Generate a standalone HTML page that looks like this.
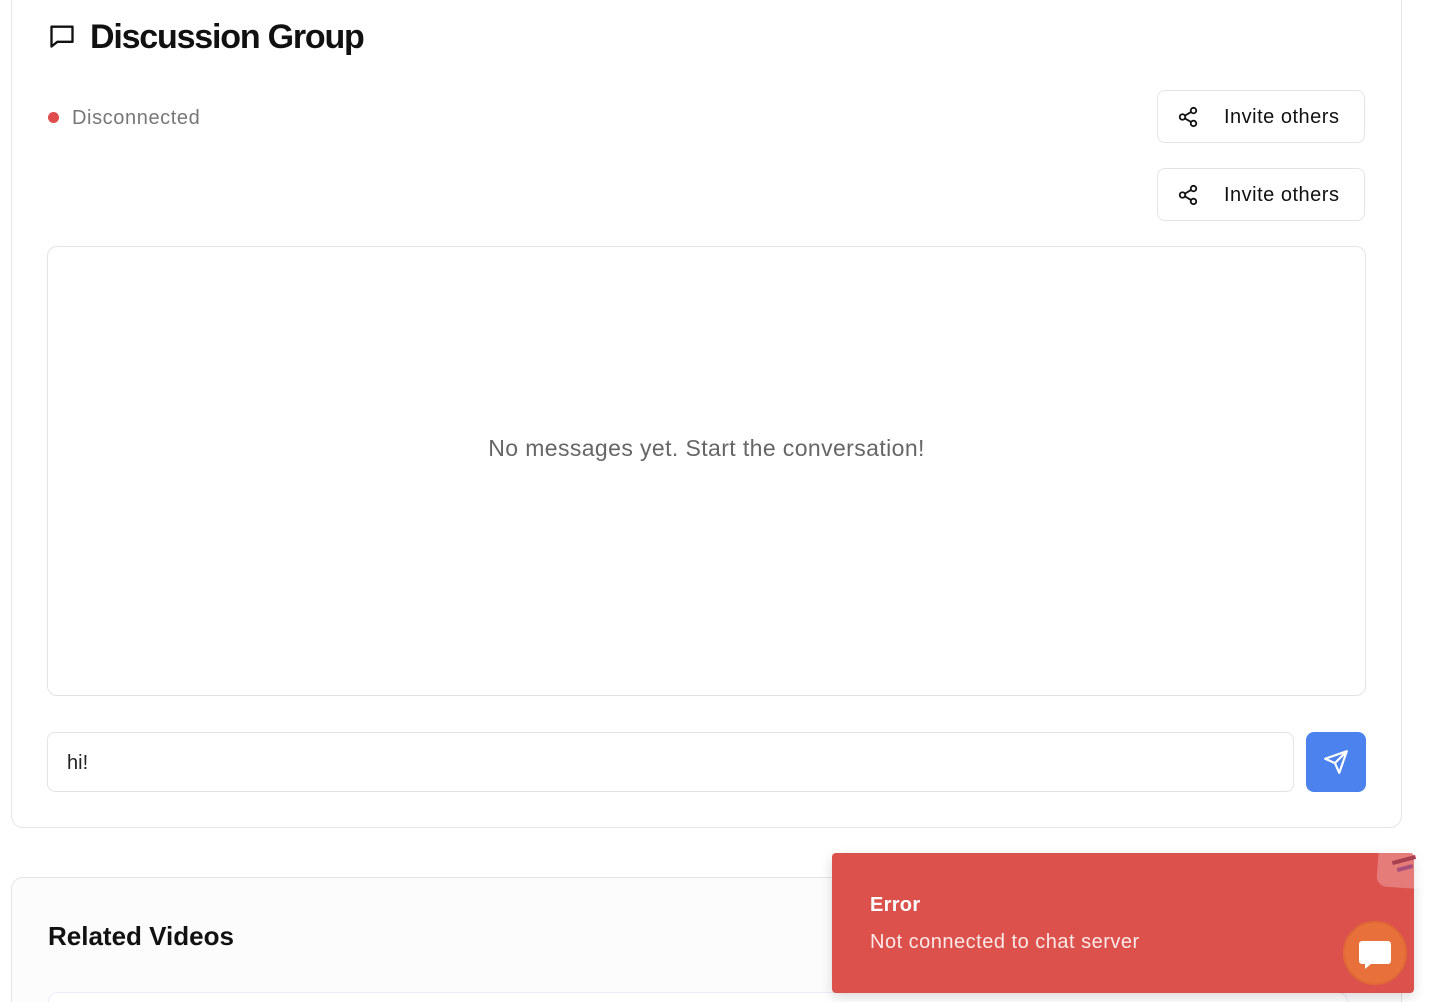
<!DOCTYPE html>
<html style="overflow:hidden;height:1002px"><head><style>
body{margin:0;width:1436px;height:1002px;overflow:hidden;background:#fff;font-family:"Liberation Sans",sans-serif;position:relative}
.card{position:absolute;left:11px;width:1391px;border:1px solid #e5e5e5;border-radius:12px;box-sizing:border-box}
.btn{position:absolute;left:1157px;width:208px;height:53px;border:1px solid #e4e4e4;border-radius:8px;box-sizing:border-box;background:#fff;font-size:20px;color:#111;letter-spacing:0.5px}
.btn svg{position:absolute;left:19px;top:15px}
.btn span{position:absolute;left:66px;top:15px}
</style></head><body>
<div class="card" style="top:-20px;height:848px;background:#fff"></div>
<svg style="position:absolute;left:48px;top:22px" width="28" height="28" viewBox="0 0 24 24" fill="none" stroke="#111" stroke-width="2" stroke-linejoin="round"><path d="M3 4h18v13H8l-5 4z"/></svg>
<div style="position:absolute;left:90px;top:18px;font-size:34px;font-weight:bold;color:#111;letter-spacing:-1.2px">Discussion Group</div>
<div style="position:absolute;left:48px;top:112px;width:11px;height:11px;border-radius:50%;background:#e04b4b"></div>
<div style="position:absolute;left:72px;top:107px;font-size:20px;color:#777;letter-spacing:0.6px">Disconnected</div>
<div class="btn" style="top:90px"><svg width="22" height="22" viewBox="0 0 24 24" fill="none" stroke="#111" stroke-width="2"><circle cx="18" cy="5" r="3"/><circle cx="6" cy="12" r="3"/><circle cx="18" cy="19" r="3"/><path d="M8.6 13.5l6.8 4M15.4 6.5l-6.8 4"/></svg><span>Invite others</span></div>
<div class="btn" style="top:168px"><svg width="22" height="22" viewBox="0 0 24 24" fill="none" stroke="#111" stroke-width="2"><circle cx="18" cy="5" r="3"/><circle cx="6" cy="12" r="3"/><circle cx="18" cy="19" r="3"/><path d="M8.6 13.5l6.8 4M15.4 6.5l-6.8 4"/></svg><span>Invite others</span></div>
<div style="position:absolute;left:47px;top:246px;width:1319px;height:450px;border:1px solid #e4e4e4;border-radius:10px;box-sizing:border-box"></div>
<div style="position:absolute;left:0;width:1413px;text-align:center;top:435px;font-size:23px;color:#666;letter-spacing:0.4px">No messages yet. Start the conversation!</div>
<div style="position:absolute;left:47px;top:732px;width:1247px;height:60px;border:1px solid #e4e4e4;border-radius:8px;box-sizing:border-box"></div>
<div style="position:absolute;left:67px;top:752px;font-size:20px;color:#222">hi!</div>
<div style="position:absolute;left:1306px;top:732px;width:60px;height:60px;border-radius:8px;background:#4b82ee"></div>
<svg style="position:absolute;left:1323px;top:749px" width="26" height="26" viewBox="0 0 24 24" fill="none" stroke="#fff" stroke-width="2" stroke-linejoin="round"><path d="M22 2L2 9l9 4 4 9zM22 2L11 13"/></svg>
<div style="position:absolute;left:11px;top:877px;width:1391px;height:125px;border:1px solid #e5e5e5;border-bottom:none;border-radius:12px 12px 0 0;box-sizing:border-box;background:#fcfcfc"></div>
<div style="position:absolute;left:48px;top:921px;font-size:26px;font-weight:bold;color:#111">Related Videos</div>
<div style="position:absolute;left:48px;top:992px;width:1300px;height:10px;border:1px solid #e6ecf8;border-bottom:none;border-radius:10px 10px 0 0;box-sizing:border-box;background:#fff"></div>
<div style="position:absolute;left:832px;top:853px;width:582px;height:140px;background:#dc514c;border-radius:4px;box-shadow:0 4px 12px rgba(0,0,0,.15)"></div>
<div style="position:absolute;left:870px;top:894px;font-size:20px;font-weight:bold;color:#fff;letter-spacing:0.3px">Error</div>
<div style="position:absolute;left:870px;top:931px;font-size:20px;color:#fde9e8;letter-spacing:0.5px">Not connected to chat server</div>
<div style="position:absolute;left:1378px;top:834px;width:55px;height:54px;border-radius:10px;background:rgba(255,255,255,.25);transform:rotate(4deg)"></div>
<div style="position:absolute;left:1392px;top:858px;width:24px;height:4px;background:#a84050;transform:rotate(-15deg)"></div>
<div style="position:absolute;left:1397px;top:866px;width:16px;height:4px;background:#a84f7a;transform:rotate(-15deg)"></div>
<div style="position:absolute;left:1343px;top:921px;width:64px;height:64px;border-radius:50%;background:#e8703a;border:2px solid #df6a35;box-sizing:border-box"></div>
<svg style="position:absolute;left:1358px;top:939px" width="34" height="32" viewBox="0 0 34 32"><path d="M4 2h26a3 3 0 0 1 3 3v17a3 3 0 0 1-3 3H13l-6 5v-5H4a3 3 0 0 1-3-3V5a3 3 0 0 1 3-3z" fill="#fff"/></svg>
</body></html>
